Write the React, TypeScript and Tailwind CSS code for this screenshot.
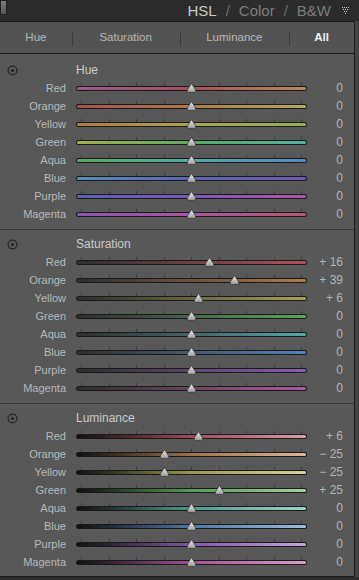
import React from 'react';

interface SliderRow {
  name: string;
  value: number;
  track: string;
}

interface Section {
  title: string;
  rows: SliderRow[];
}

const sections: Section[] = [
  {
    title: 'Hue',
    rows: [
      { name: 'Red', value: 0, track: 'from-[#9c5a8c] via-[#a84e5c] to-[#b98a5a]' },
      { name: 'Orange', value: 0, track: 'from-[#a85050] via-[#b07a4a] to-[#b3ad5e]' },
      { name: 'Yellow', value: 0, track: 'from-[#b07c48] via-[#aca352] to-[#92b05a]' },
      { name: 'Green', value: 0, track: 'from-[#a2ae56] via-[#5aa860] to-[#58aea0]' },
      { name: 'Aqua', value: 0, track: 'from-[#5aaa62] via-[#56a8a4] to-[#5a88c0]' },
      { name: 'Blue', value: 0, track: 'from-[#5a8cb8] via-[#5a64b8] to-[#7058b4]' },
      { name: 'Purple', value: 0, track: 'from-[#5a60b8] via-[#7c56b4] to-[#ae58a8]' },
      { name: 'Magenta', value: 0, track: 'from-[#8a58b4] via-[#aa56a0] to-[#b45a70]' },
    ],
  },
  {
    title: 'Saturation',
    rows: [
      { name: 'Red', value: 16, track: 'from-[#2e2e2e] via-[#6a4046] to-[#b0505e]' },
      { name: 'Orange', value: 39, track: 'from-[#2e2e2e] via-[#6a5040] to-[#b07a4a]' },
      { name: 'Yellow', value: 6, track: 'from-[#2e2e2e] via-[#686640] to-[#aaa452]' },
      { name: 'Green', value: 0, track: 'from-[#2e2e2e] via-[#466648] to-[#5aa860]' },
      { name: 'Aqua', value: 0, track: 'from-[#2e2e2e] via-[#44666a] to-[#56a8a4]' },
      { name: 'Blue', value: 0, track: 'from-[#2e2e2e] via-[#44586e] to-[#5680b8]' },
      { name: 'Purple', value: 0, track: 'from-[#2e2e2e] via-[#5a466a] to-[#8a5cb2]' },
      { name: 'Magenta', value: 0, track: 'from-[#2e2e2e] via-[#6a4460] to-[#b058a0]' },
    ],
  },
  {
    title: 'Luminance',
    rows: [
      { name: 'Red', value: 6, track: 'from-[#111111] via-[#a04a58] to-[#d8a0a8]' },
      { name: 'Orange', value: -25, track: 'from-[#111111] via-[#a0744a] to-[#d8b89a]' },
      { name: 'Yellow', value: -25, track: 'from-[#111111] via-[#9c984e] to-[#d6d29c]' },
      { name: 'Green', value: 25, track: 'from-[#111111] via-[#569c58] to-[#a6d0a0]' },
      { name: 'Aqua', value: 0, track: 'from-[#111111] via-[#4e9a96] to-[#9fd2cc]' },
      { name: 'Blue', value: 0, track: 'from-[#111111] via-[#4e78a8] to-[#9ebcdc]' },
      { name: 'Purple', value: 0, track: 'from-[#111111] via-[#8458a8] to-[#c0a4d8]' },
      { name: 'Magenta', value: 0, track: 'from-[#111111] via-[#a45292] to-[#d8a0c8]' },
    ],
  },
];

const ticks = [5, 32.5, 60, 87.5, 115, 142.5, 170, 197.5, 225];

function formatValue(v: number) {
  if (v === 0) return '0';
  return v > 0 ? `+ ${v}` : `\u2212 ${Math.abs(v)}`;
}

function Thumb() {
  return (
    <svg width="11" height="10" viewBox="0 0 11 10">
      <defs>
        <linearGradient id="thumbFill" x1="0" y1="0" x2="0" y2="1">
          <stop offset="0" stopColor="#ececec" />
          <stop offset="1" stopColor="#9c9c9c" />
        </linearGradient>
      </defs>
      <path
        d="M5.5 0.6 L9.6 6.8 Q10.4 9.2 8.2 9.4 L2.8 9.4 Q0.6 9.2 1.4 6.8 Z"
        fill="url(#thumbFill)"
        stroke="#3a3a3a"
        strokeWidth="0.8"
      />
    </svg>
  );
}

function Slider({ row }: { row: SliderRow }) {
  return (
    <div className="flex h-[18px] items-center">
      <div className="w-[66px] text-right text-[11px] leading-none text-[#b8b8b8]">{row.name}</div>
      <div className="relative ml-[10px] h-[18px] w-[231px]">
        {ticks.map((t) => (
          <div key={t} className="absolute top-[4px] h-[3px] w-px bg-[#3c3c3c]" style={{ left: t }} />
        ))}
        <div className="absolute left-0 right-0 top-[7px] h-[5px] rounded-full bg-[#1a1a1a] p-px">
          <div className={`h-full w-full rounded-full bg-linear-to-r ${row.track}`} />
        </div>
        <div className="absolute top-[4px]" style={{ left: 115 + row.value * 1.1 - 5 }}>
          <Thumb />
        </div>
      </div>
      <div className="w-[36px] text-right text-[12px] leading-none text-[#b4b4b4]">{formatValue(row.value)}</div>
    </div>
  );
}

function TargetIcon() {
  return (
    <svg width="11" height="11" viewBox="0 0 11 11">
      <circle cx="5.5" cy="5.5" r="4.4" fill="none" stroke="#262626" strokeWidth="1.3" />
      <circle cx="5.5" cy="5.5" r="1.6" fill="#262626" />
    </svg>
  );
}

function SectionBlock({ section, index }: { section: Section; index: number }) {
  const spacing =
    index === 0
      ? 'pt-[7px] pb-[6px]'
      : index === 1
        ? 'border-t border-[#383838] pt-[5px] pb-[6px]'
        : 'border-t border-[#383838] pt-[5px] pb-[5px]';
  return (
    <div className={spacing}>
      <div className="flex h-[18px] items-center">
        <div className="ml-[7px] w-[69px]">
          <TargetIcon />
        </div>
        <div className="text-[12px] leading-none text-[#cacaca]">{section.title}</div>
      </div>
      {section.rows.map((row) => (
        <Slider key={row.name} row={row} />
      ))}
    </div>
  );
}

function DotTriangle() {
  const dots: [number, number][] = [];
  [4, 3, 2, 1].forEach((n, r) => {
    for (let i = 0; i < n; i++) dots.push([r + i * 2, r * 2]);
  });
  return (
    <svg width="8" height="8" viewBox="0 0 8 8">
      {dots.map(([x, y]) => (
        <rect key={`${x}-${y}`} x={x} y={y} width="1" height="1" fill="#c8c8c8" />
      ))}
    </svg>
  );
}

const tabs = [
  { label: 'Hue', width: 'w-[72px]', active: false },
  { label: 'Saturation', width: 'w-[108px]', active: false },
  { label: 'Luminance', width: 'w-[110px]', active: false },
  { label: 'All', width: 'w-[65px]', active: true },
];

export default function App() {
  return (
    <div
      className="h-[580px] w-[359px] overflow-hidden bg-[#2c2c2c]"
      style={{ fontFamily: '"Liberation Sans", Arial, sans-serif' }}
    >
      {/* Header */}
      <div className="flex h-[21px] items-center bg-[#2c2c2c]">
        <div className="mb-[4px] h-[15px] w-[7px] self-start border border-[#1e1e1e] bg-linear-to-b from-[#7a7a7a] to-[#565656]" />
        <div className="ml-auto flex items-center gap-[9px] pr-[9px] text-[15px] leading-none">
          <span className="text-[#c9c9c9]">HSL</span>
          <span className="text-[#6e6e6e]">/</span>
          <span className="text-[#7c7c7c]">Color</span>
          <span className="text-[#6e6e6e]">/</span>
          <span className="text-[#7c7c7c]">B&amp;W</span>
          <span className="ml-[2px]">
            <DotTriangle />
          </span>
        </div>
      </div>

      <div className="flex">
        <div className="w-[355px] border-r border-[#1c1c1c]">
          {/* Tabs */}
          <div className="flex h-[33px] items-center border-y border-[#1c1c1c] bg-[#535353]">
            {tabs.map((tab, i) => (
              <div key={tab.label} className={`relative flex h-full items-center justify-center ${tab.width}`}>
                {i > 0 && <div className="absolute left-0 top-[10px] h-[14px] w-px bg-[#3c3c3c]" />}
                <span
                  className={`text-[11.5px] leading-none ${tab.active ? 'font-bold text-[#f0f0f0]' : 'text-[#b6b6b6]'}`}
                >
                  {tab.label}
                </span>
              </div>
            ))}
          </div>

          {/* Sections */}
          <div className="border-b border-[#1c1c1c] bg-[#585858]">
            {sections.map((s, i) => (
              <SectionBlock key={s.title} section={s} index={i} />
            ))}
          </div>
        </div>
        <div className="flex-1 bg-[#444444]" />
      </div>
    </div>
  );
}
